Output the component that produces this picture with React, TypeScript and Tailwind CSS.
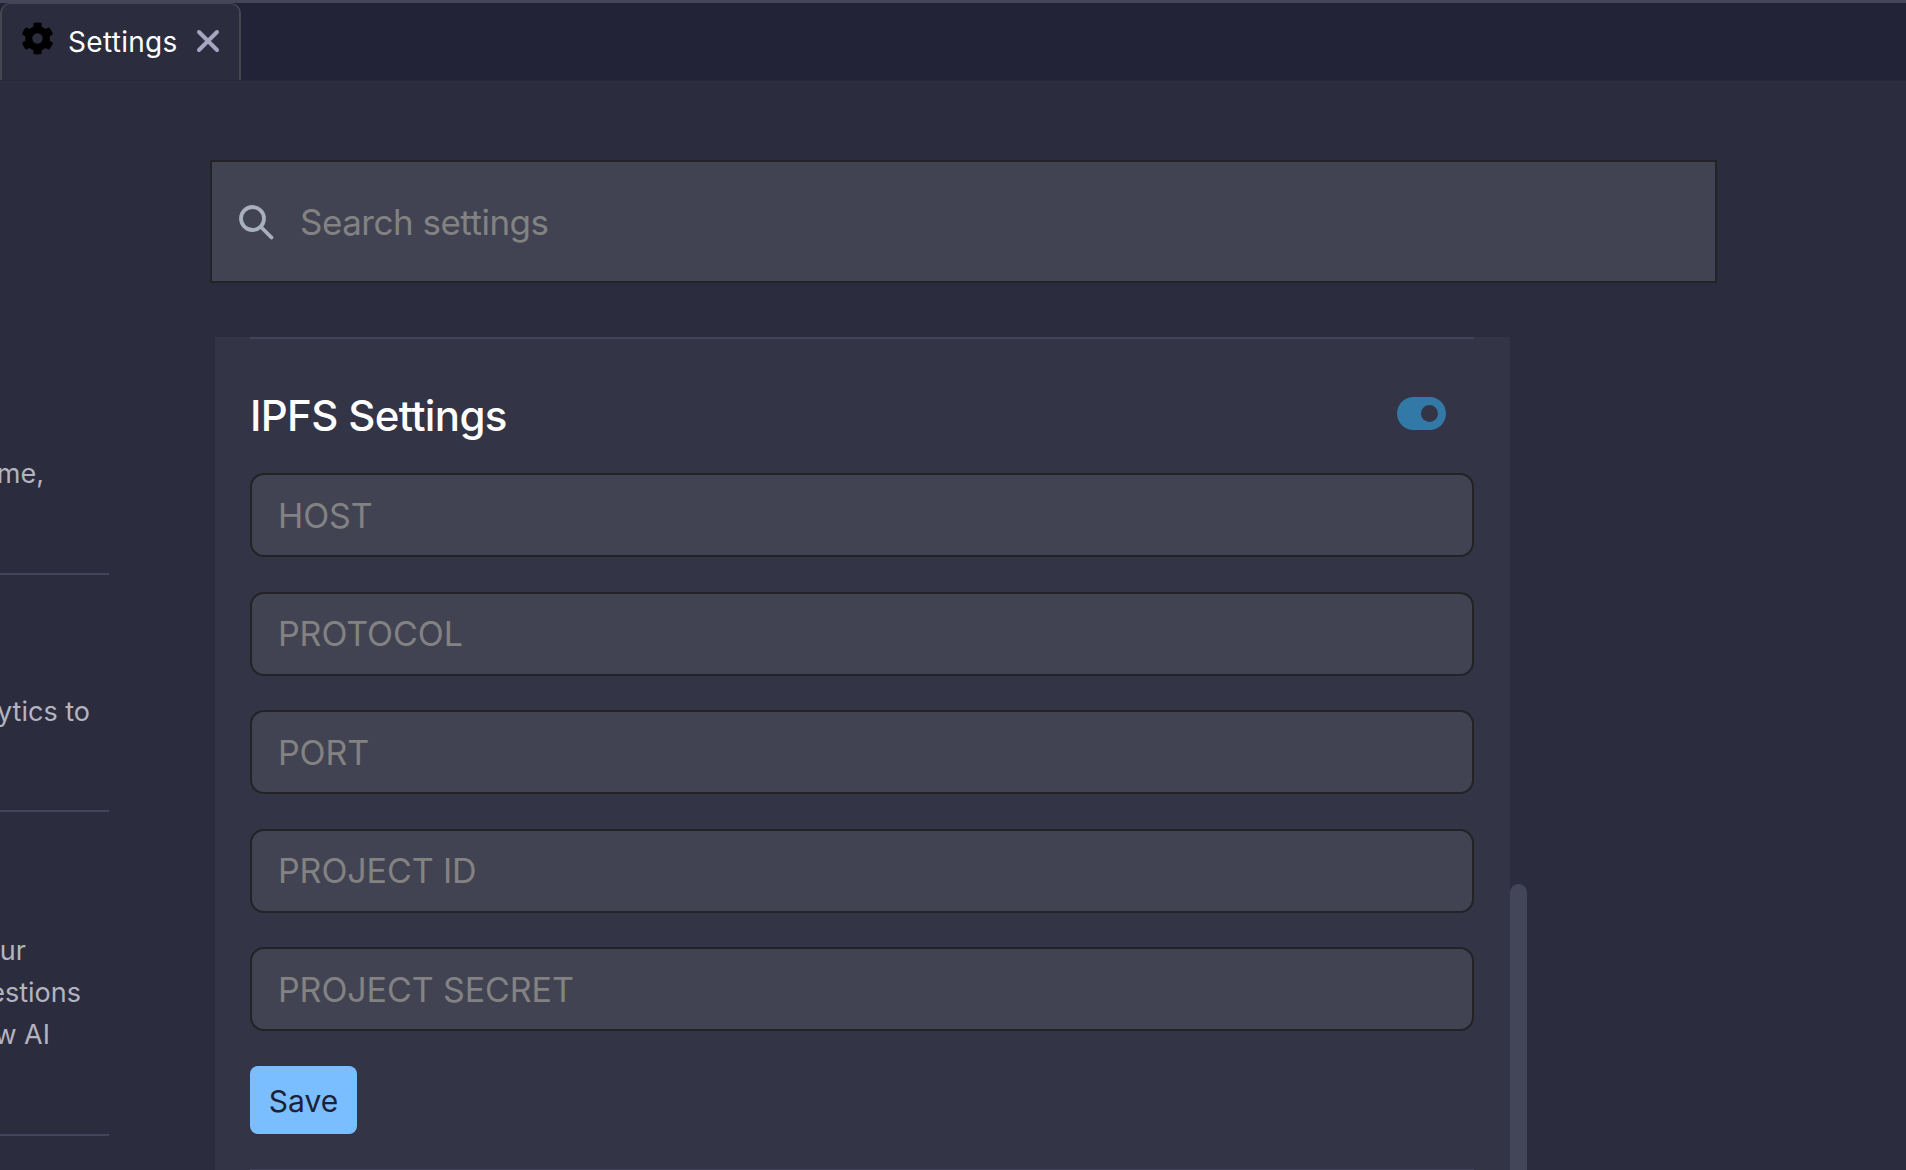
import React from "react";
import { FaCog } from "react-icons/fa";

const FONT = "[font-family:Inter,'Liberation_Sans',sans-serif]";

function SideLine({ w, children }: { w: string; children: React.ReactNode }) {
  return (
    <div className={`flex justify-end h-[42px] leading-[42px] ${w}`}>
      <span className="whitespace-nowrap">{children}</span>
    </div>
  );
}

function Field({ label }: { label: string }) {
  return (
    <input
      readOnly
      placeholder={label}
      className="block w-full h-[84px] shrink-0 rounded-[14px] border-[2px] border-[#232326] bg-[#424352] pl-[26px] text-[34px] tracking-[-0.1px] outline-none placeholder:text-[#828282]"
    />
  );
}

export default function App() {
  return (
    <div className={`${FONT} w-[1906px] h-[1170px] overflow-hidden flex flex-col bg-[#2b2c3d] text-white`}>
      <div className="h-[3px] shrink-0 bg-[#45465a]" />
      <div className="h-[78px] shrink-0 flex bg-[#222337] border-b border-b-[#26273a]">
        <div className="w-[241px] h-full flex items-center bg-[#2b2c3d] rounded-t-[10px] border-l-[2px] border-r-[2px] border-t border-[#45464f] pl-[19px]">
          <FaCog className="w-[33px] h-[33px] shrink-0 text-black -mt-[7px]" />
          <span className="ml-[14px] text-[28px] tracking-[0.3px] text-white">Settings</span>
          <svg viewBox="0 0 24 24" className="ml-[18px] -mt-[2px] w-[24px] h-[24px] shrink-0" fill="none" stroke="#a6a6c0" strokeWidth="4" strokeLinecap="round">
            <path d="M3 3 21 21M21 3 3 21" />
          </svg>
        </div>
      </div>
      <div className="flex-1 min-h-0 flex">
        <div className="w-[109px] shrink-0 pt-[372px] text-[27px] text-[#b4b4c0] overflow-hidden">
          <SideLine w="w-[44px]">theme,</SideLine>
          <div className="mt-[78px] h-[2px] bg-[#44455a]" />
          <div className="mt-[116px]"><SideLine w="w-[90px]">analytics to</SideLine></div>
          <div className="mt-[77px] h-[2px] bg-[#44455a]" />
          <div className="mt-[118px]">
            <SideLine w="w-[26px]">your</SideLine>
            <SideLine w="w-[81px]">suggestions</SideLine>
            <SideLine w="w-[50px]">new AI</SideLine>
          </div>
          <div className="mt-[78px] h-[2px] bg-[#44455a]" />
        </div>
        <div className="ml-[101px] flex-1 min-w-0 pt-[79px]">
          <div className="w-[1507px] h-[123px] flex items-center bg-[#424352] border-[2px] border-[#232326] pl-[26px]">
            <svg viewBox="0 0 36 36" className="w-[36px] h-[36px] shrink-0" fill="none" stroke="#a9b0bd" strokeWidth="3.8" strokeLinecap="round">
              <circle cx="14.5" cy="14.5" r="11.5" />
              <path d="M23 23 33.5 33.5" />
            </svg>
            <input
              readOnly
              placeholder="Search settings"
              className="ml-[26px] flex-1 bg-transparent pt-[2px] text-[35px] tracking-[-0.5px] outline-none placeholder:text-[#828282]"
            />
          </div>
          <div className="flex items-start ml-[5px] mt-[54px]">
            <div className="w-[1295px] shrink-0 h-[900px] bg-[#333445] pl-[35px] pr-[36px]">
              <div className="h-[2px] bg-[#44455a]" />
              <div className="h-[134px] pt-[40px] flex justify-between items-start">
                <h2 className="h-[74px] leading-[74px] text-[42px] font-medium tracking-[-0.65px] text-white">IPFS Settings</h2>
                <div className="mt-[18px] mr-[28px] w-[49px] h-[33px] rounded-full bg-[#3379a8] flex items-center justify-end pr-[8px]">
                  <div className="w-[17px] h-[17px] rounded-full bg-[#333445]" />
                </div>
              </div>
              <div className="flex flex-col gap-[34.5px]">
                <Field label="HOST" />
                <Field label="PROTOCOL" />
                <Field label="PORT" />
                <Field label="PROJECT ID" />
                <Field label="PROJECT SECRET" />
              </div>
              <button className="block mt-[35px] w-[107px] h-[68px] rounded-[8px] bg-[#7abeff] pt-[2px] text-[30px] text-[#1e2036]">Save</button>
              <div className="mt-[35px] h-[2px] bg-[#44455a]" />
            </div>
            <div className="w-[17px] h-[400px] mt-[547px] rounded-t-full bg-[#434559]" />
          </div>
        </div>
      </div>
    </div>
  );
}
